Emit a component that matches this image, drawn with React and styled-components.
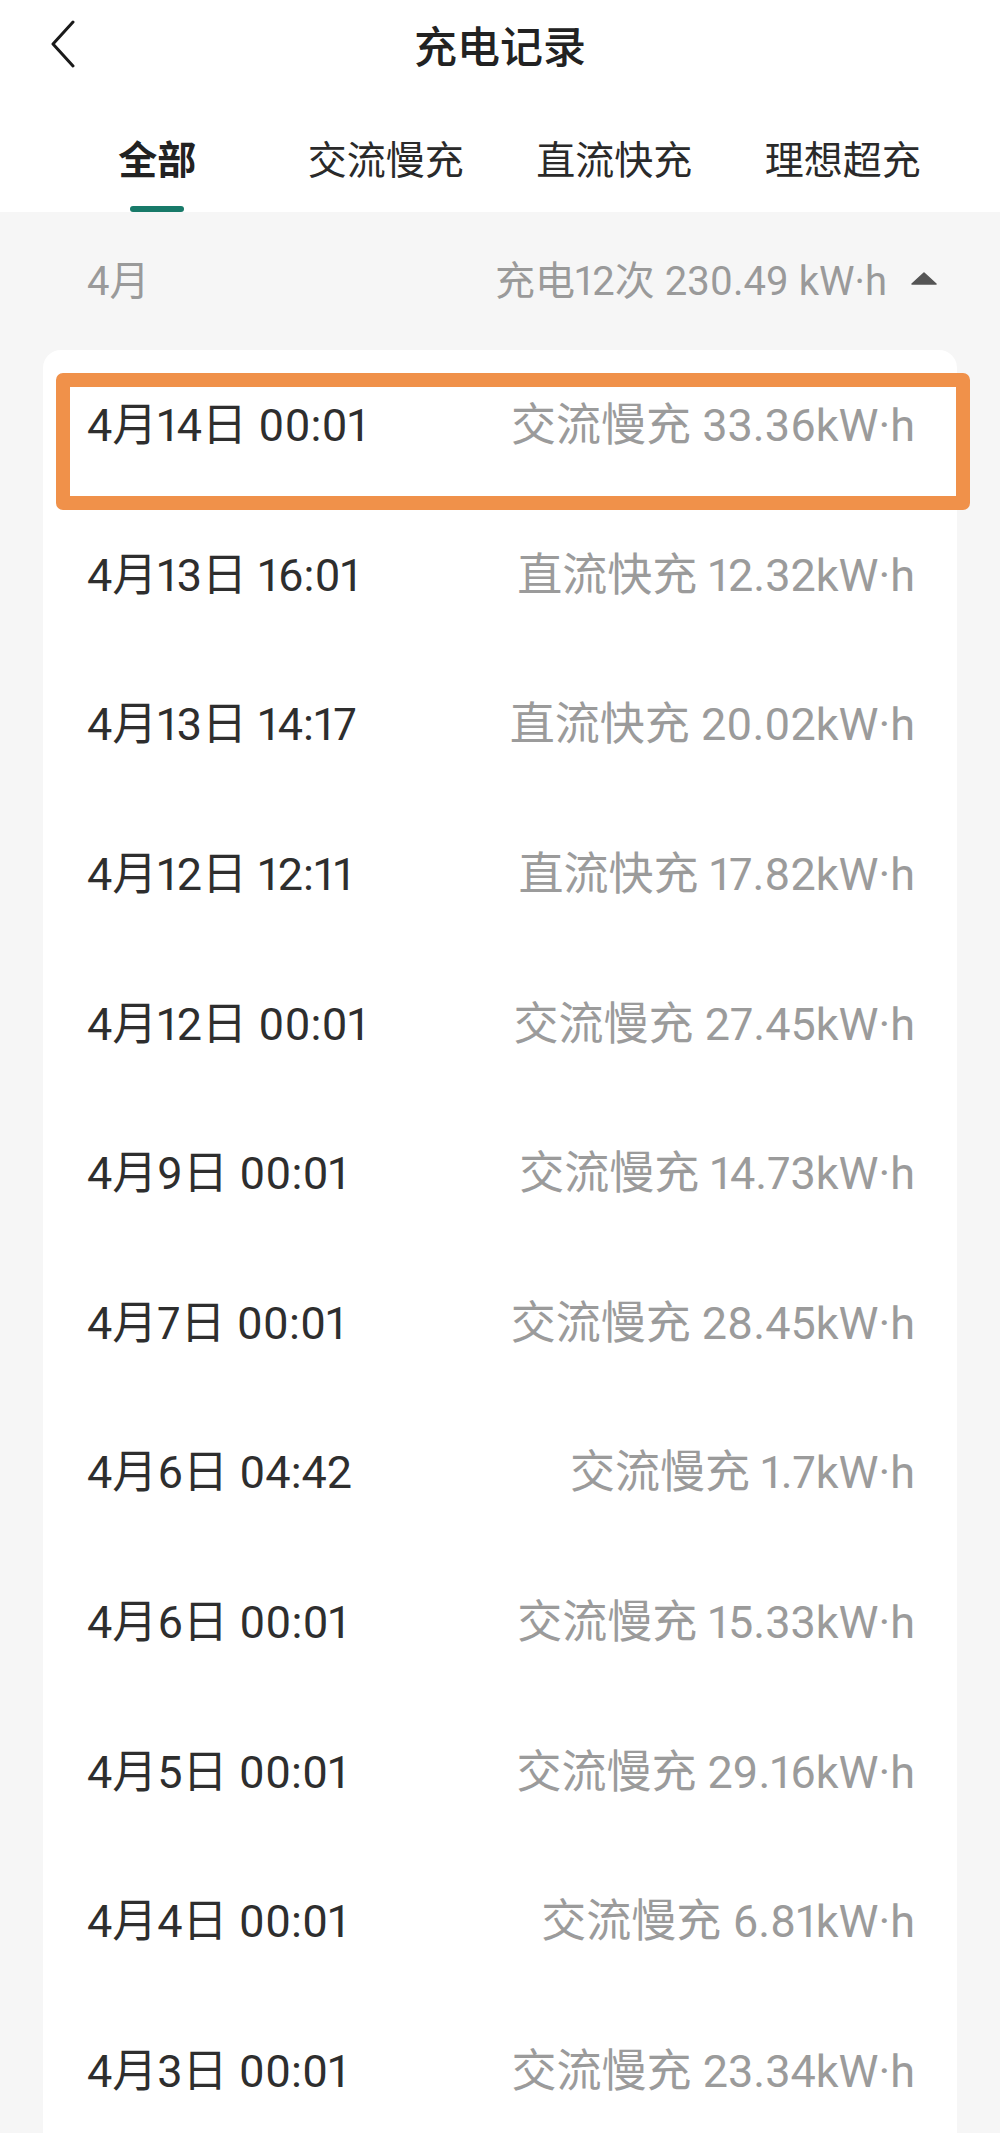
import React from "react";
import styled, { createGlobalStyle } from "styled-components";

const records = [
  { date: "4月14日 00:01", type: "交流慢充", kwh: "33.36", marked: true },
  { date: "4月13日 16:01", type: "直流快充", kwh: "12.32" },
  { date: "4月13日 14:17", type: "直流快充", kwh: "20.02" },
  { date: "4月12日 12:11", type: "直流快充", kwh: "17.82" },
  { date: "4月12日 00:01", type: "交流慢充", kwh: "27.45" },
  { date: "4月9日 00:01", type: "交流慢充", kwh: "14.73" },
  { date: "4月7日 00:01", type: "交流慢充", kwh: "28.45" },
  { date: "4月6日 04:42", type: "交流慢充", kwh: "1.7" },
  { date: "4月6日 00:01", type: "交流慢充", kwh: "15.33" },
  { date: "4月5日 00:01", type: "交流慢充", kwh: "29.16" },
  { date: "4月4日 00:01", type: "交流慢充", kwh: "6.81" },
  { date: "4月3日 00:01", type: "交流慢充", kwh: "23.34" },
];

const tabs = ["全部", "交流慢充", "直流快充", "理想超充"];

const App = () => {
  return (
    <Page>
      <GlobalStyle />
      <Header>
        <TitleBar>
          <BackButton>
            <svg width="26" height="48" viewBox="0 0 26 48">
              <polyline
                points="23,2 3,24 23,46"
                fill="none"
                stroke="#1a1a1a"
                strokeWidth="3"
                strokeLinecap="round"
                strokeLinejoin="round"
              />
            </svg>
          </BackButton>
          <Title>充电记录</Title>
        </TitleBar>
        <Tabs>
          {tabs.map((t, i) => (
            <Tab key={t} $active={i === 0}>
              {t}
              {i === 0 && <Underline />}
            </Tab>
          ))}
        </Tabs>
      </Header>

      <MonthRow>
        <Month>4月</Month>
        <Summary>
          充电12次 230.49 kW·h
          <svg width="26" height="13" viewBox="0 0 26 13">
            <polygon
              points="13,1 25,12 1,12"
              fill="#555"
              stroke="#555"
              strokeWidth="1.5"
              strokeLinejoin="round"
            />
          </svg>
        </Summary>
      </MonthRow>

      <Card>
        {records.map((r) => (
          <Row key={r.date}>
            <DateText>{r.date}</DateText>
            <Detail>
              {r.type} {r.kwh}kW·h
            </Detail>
            {r.marked && <Highlight />}
          </Row>
        ))}
      </Card>
    </Page>
  );
};

export default App;

const GlobalStyle = createGlobalStyle`
  body {
    margin: 0;
    background: #f6f6f6;
    font-family: "Roboto", "Noto Sans CJK SC", sans-serif;
    overflow: hidden;
  }
`;

const Page = styled.div`
  width: 1000px;
  min-height: 2133px;
  background: #f6f6f6;
`;

const Header = styled.div`
  background: #ffffff;
  display: flex;
  flex-direction: column;
`;

const TitleBar = styled.div`
  height: 96px;
  box-sizing: border-box;
  padding-bottom: 8px;
  display: flex;
  align-items: center;
  justify-content: center;
  position: relative;
`;

const BackButton = styled.div`
  position: absolute;
  left: 50px;
  top: 20px;
  display: flex;
`;

const Title = styled.div`
  font-family: "Noto Sans CJK SC", sans-serif;
  font-size: 43px;
  font-weight: 500;
  color: #222;
`;

const Tabs = styled.div`
  height: 116px;
  padding: 0 43px;
  display: grid;
  grid-template-columns: repeat(4, 1fr);
`;

const Tab = styled.div`
  position: relative;
  display: flex;
  justify-content: center;
  padding-top: 35px;
  font-family: "Noto Sans CJK SC", sans-serif;
  font-size: 39px;
  line-height: 52px;
  font-weight: ${(p) => (p.$active ? 700 : 400)};
  color: ${(p) => (p.$active ? "#222" : "#2a2a2a")};
`;

const Underline = styled.span`
  position: absolute;
  bottom: 0;
  left: 50%;
  transform: translateX(-50%);
  width: 54px;
  height: 6px;
  border-radius: 3px;
  background: #187a69;
`;

const MonthRow = styled.div`
  height: 138px;
  box-sizing: border-box;
  padding: 0 63px 6px 87px;
  display: flex;
  align-items: center;
  justify-content: space-between;
  font-size: 40px;
  color: #9a9a9a;
  font-variant-numeric: proportional-nums;
`;

const Month = styled.div``;

const Summary = styled.div`
  display: flex;
  align-items: center;
  gap: 24px;
`;

const Card = styled.div`
  margin: 0 43px;
  background: #ffffff;
  border-radius: 18px 18px 0 0;
  display: flex;
  flex-direction: column;
`;

const Row = styled.div`
  position: relative;
  height: 149.6px;
  box-sizing: border-box;
  padding: 0 42px 6px 44px;
  display: flex;
  align-items: center;
  justify-content: space-between;
  font-size: 45px;
  font-variant-numeric: proportional-nums;
`;

const DateText = styled.div`
  color: #2e2e2e;
`;

const Detail = styled.div`
  color: #9b9b9b;
`;

const Highlight = styled.div`
  position: absolute;
  left: 13px;
  top: 23px;
  width: 914px;
  height: 137px;
  box-sizing: border-box;
  border: 14px solid #f0914a;
  border-radius: 7px;
`;
